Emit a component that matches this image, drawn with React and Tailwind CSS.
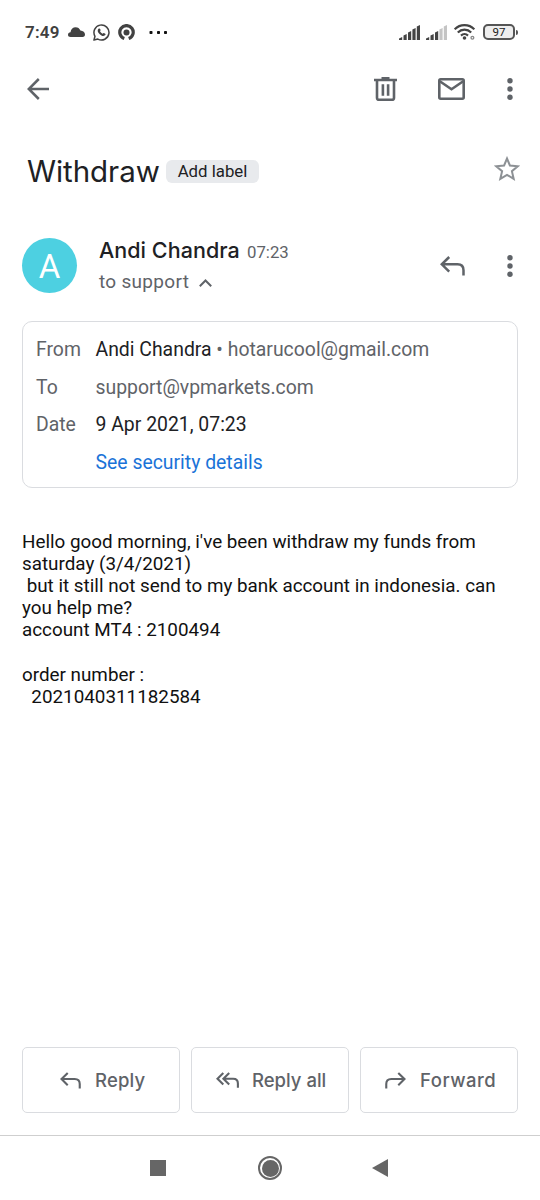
const details = [
  { label: 'From', value: 'Andi Chandra', extra: 'hotarucool@gmail.com' },
  { label: 'To', muted: 'support@vpmarkets.com' },
  { label: 'Date', value: '9 Apr 2021, 07:23' },
];

const message = `Hello good morning, i've been withdraw my funds from
saturday (3/4/2021)
 but it still not send to my bank account in indonesia. can
you help me?
account MT4 : 2100494

order number :
  2021040311182584`;

function SignalBars({ weak }) {
  return (
    <svg className="w-[21px] h-[15px]" viewBox="0 0 21 15" fill="#444">
      <path d="M0 15v-1.500L3.200 12v3Z" />
      <path d="M4.500 15v-4.500L7.700 9v6Z" />
      <path d="M9 15V7.500L12.200 6v9Z" />
      <path d="M13.400 15V4.500L16.600 3v12Z" fill={weak ? '#c4c4c4' : '#444'} />
      <path d="M17.800 15V1.500L21 0v15Z" fill={weak ? '#c4c4c4' : '#444'} />
    </svg>
  );
}

function StatusBar() {
  return (
    <div className="h-16 flex items-center justify-between pl-[25px] pr-[22px]">
      <div className="flex items-center">
        <span className="w-[43px] text-[17px] leading-none font-semibold text-[#404040] tracking-[0.2px] whitespace-nowrap">7:49</span>
        <svg className="w-[17px] h-[10px]" viewBox="0 0 17 10" fill="#424242">
          <path d="M2.600 10C.9 10 0 9 0 7.700 0 6.400 1 5.400 2.500 5.200 3 2 5 .2 7.600.2c2.300 0 4 1.200 4.800 3.300 2.800.2 4.600 1.700 4.600 4 0 1.500-.8 2.500-2.400 2.500Z" />
        </svg>
        <svg className="ml-2 w-[17px] h-[17px]" viewBox="0 0 17 17" fill="none" stroke="#424242">
          <path strokeWidth="1.500" strokeLinejoin="round" d="M.9 16.100 2 12.300A7.500 7.500 0 1 1 4.900 15.100Z" />
          <path fill="#424242" stroke="none" d="M5.900 4.600c.5-.4 1-.2 1.200.3l.5 1.200c.1.400-.5.900-.6 1.200.6 1.200 1.500 2 2.700 2.500.4-.1.800-.9 1.200-.8l1.300.7c.5.200.5.600.2 1.100-.8 1.400-2.400 1.400-4 .6C6.500 10.500 5.200 9 4.800 7.600c-.3-1.200.2-2.300 1.100-3Z" />
        </svg>
        <svg className="ml-2 w-[17px] h-[17px]" viewBox="0 0 17 17" fill="none">
          <path stroke="#424242" strokeWidth="3.200" d="M6.300 14.600A6.700 6.700 0 1 1 10.700 14.600" />
          <circle cx="8.500" cy="8.500" r="3" fill="#424242" />
        </svg>
        <svg className="ml-[14px] w-[19px] h-[3px]" viewBox="0 0 19 3" fill="#111">
          <rect x="0.500" width="3" height="3" rx="0.800" />
          <rect x="8" width="3" height="3" rx="0.800" />
          <rect x="15" width="3" height="3" rx="0.800" />
        </svg>
      </div>

      <div className="flex items-center">
        <SignalBars />
        <div className="w-1.5" />
        <SignalBars weak />
        <svg className="ml-[7px] w-[21px] h-[16px]" viewBox="0 0 21 16" fill="none" stroke="#444" strokeWidth="2.200">
          <path d="M.7 5.300C6-.2 15-.2 20.300 5.300M3.800 8.500c3.800-3.800 9.600-3.800 13.400 0M7 11.600c2-1.900 5-1.900 7 0" />
          <circle cx="10.500" cy="14" r="1.800" fill="#444" stroke="none" />
          <circle cx="18.400" cy="13.700" r="1.400" stroke="#888" strokeWidth="1.300" />
        </svg>
        <div className="ml-2 w-8 h-4 rounded-[5px] border-2 border-[#555] bg-[#eee] flex items-center justify-center pt-px text-[11.500px] leading-none text-[#222]">
          97
        </div>
        <div className="ml-px w-[2px] h-[5px] rounded-r bg-[#555]" />
      </div>
    </div>
  );
}

function MoreDots() {
  return (
    <svg className="w-[6px] h-[22px]" viewBox="0 0 6 22" fill="#5f6368">
      <circle cx="3" cy="2.800" r="2.700" />
      <circle cx="3" cy="11" r="2.700" />
      <circle cx="3" cy="19.200" r="2.700" />
    </svg>
  );
}

function Toolbar() {
  return (
    <div className="h-[50px] flex items-center pl-[26.500px] pr-[27.500px]">
      <svg className="w-[22px] h-[22px]" viewBox="0 0 22 22" fill="none" stroke="#5f6368" strokeWidth="2.500">
        <path d="M22 11H2M11.800 1 1.800 11l10 10" />
      </svg>
      <svg className="ml-auto mt-px w-[23px] h-[25px]" viewBox="0 0 23 26" preserveAspectRatio="none" fill="none" stroke="#5f6368">
        <path strokeWidth="2.600" d="M0 3h23M3 3v18.500q0 2.200 2.200 2.200h12.600q2.200 0 2.200-2.200V3" />
        <path strokeWidth="2.600" d="M8.900 7.500v12M14.100 7.500v12" />
        <path fill="#5f6368" stroke="none" d="M7.500 0h8v3h-8z" />
      </svg>
      <svg className="ml-[41px] w-[27px] h-[22px]" viewBox="0 0 27 22" fill="none" stroke="#5f6368" strokeWidth="2.600">
        <rect x="1.300" y="1.300" width="24.400" height="19.400" rx="1.400" />
        <path d="m1.800 3.200 11.700 8 11.700-8" />
      </svg>
      <div className="ml-[41.500px] flex"><MoreDots /></div>
    </div>
  );
}

function ReplyIcon({ className }) {
  return (
    <svg className={className} viewBox="0 0 25 20" fill="none" stroke="#5f6368" strokeWidth="2.500">
      <path d="M9.200 1 1.800 8.300l7.400 7.300M2 8.300h15.500q6 0 6 6V19.500" />
    </svg>
  );
}

function ReplyAllIcon() {
  return (
    <svg className="w-[23px] h-[16px]" viewBox="0 0 23 16" fill="none" stroke="#5f6368" strokeWidth="2.100">
      <path d="M7.300.9 1.500 6.700l5.800 5.900M13.200.9 7.400 6.700l5.800 5.900M7.600 6.700h9.600q4.700 0 4.700 4.700V15.800" />
    </svg>
  );
}

function ActionButton({ icon, label, className }) {
  return (
    <button className={`w-[158px] h-[66px] flex items-center rounded-[5px] border-[1.500px] border-[#dadce0] text-[18.500px] font-medium text-[#5f6368] whitespace-nowrap font-[Inter,sans-serif] ${className}`}>
      {icon}
      <span className="pt-0.5">{label}</span>
    </button>
  );
}

export default function App() {
  return (
    <div className="w-[540px] h-[1200px] flex flex-col overflow-hidden bg-white font-[Roboto,sans-serif] text-[#202124]">
      <StatusBar />
      <Toolbar />

      <div className="mt-[26px] h-[62px] flex items-center pl-[27px] pr-5">
        <h1 className="w-[139px] pt-px text-[29.500px] leading-none font-[Inter,sans-serif] tracking-[-0.050px] whitespace-nowrap">Withdraw</h1>
        <span className="w-[93px] h-[23px] rounded-md bg-[#e8eaed] flex items-center justify-center pt-px text-[16.800px] whitespace-nowrap">
          Add label
        </span>
        <svg className="ml-auto w-[26px] h-[25px] mb-[5px]" viewBox="0 0 26 25" fill="none" stroke="#8d9195" strokeWidth="2">
          <path d="m13 2.500 2.900 7 7.900.7-5.900 5 1.800 7.700-6.700-4.100-6.700 4.100 1.800-7.700-5.900-5 7.900-.7Z" />
        </svg>
      </div>

      <div className="mt-8 h-16 flex items-center pl-[22px] pr-[27px]">
        <div className="-mt-px w-[55px] h-[55px] rounded-full bg-[#4dd0e1] flex items-center justify-center pt-px text-[33px] leading-none text-white">
          A
        </div>
        <div className="ml-[22px]">
          <div className="h-8 flex items-baseline whitespace-nowrap">
            <span className="w-[148px] text-[21.500px] leading-8 font-medium tracking-[0.050px] font-[Inter,sans-serif]">Andi Chandra</span>
            <span className="text-[16.800px] text-[#5f6368]">07:23</span>
          </div>
          <div className="h-8 flex items-center pt-px text-[19px] text-[#5f6368]">
            <span className="w-[100px] tracking-[0.300px] whitespace-nowrap">to support</span>
            <svg className="w-[13px] h-[8px]" viewBox="0 0 13 8" fill="none" stroke="#5f6368" strokeWidth="2">
              <path d="m.8 7.200 5.700-5.700 5.700 5.700" />
            </svg>
          </div>
        </div>
        <ReplyIcon className="ml-auto w-[25px] h-[20px]" />
        <div className="ml-[42px] flex"><MoreDots /></div>
      </div>

      <div className="mt-[23px] mx-[22px] h-[167px] rounded-[10px] border-[1.500px] border-[#dadce0] pl-[13px] pt-[9px] text-[19.400px]">
        {details.map((row) => (
          <div key={row.label} className="h-[37.500px] flex items-center whitespace-nowrap">
            <span className="w-[59.500px] text-[#5f6368]">{row.label}</span>
            {row.value && <span>{row.value}</span>}
            {row.extra && <span className="text-[#5f6368] whitespace-pre"> • {row.extra}</span>}
            {row.muted && <span className="text-[#5f6368]">{row.muted}</span>}
          </div>
        ))}
        <div className="h-[37.500px] flex items-center pl-[59.500px] text-[#1a73d8]">See security details</div>
      </div>

      <p className="mt-[43px] mx-[22px] text-[18.830px] leading-[22.100px] text-[#111] whitespace-pre">{message}</p>

      <div className="mt-auto mb-[22px] mx-[22px] flex gap-[11px]">
        <ActionButton className="gap-[14px] pl-[37px] tracking-[0.150px]" icon={<ReplyIcon className="w-[21px] h-[17px]" />} label="Reply" />
        <ActionButton className="gap-[13px] pl-[24px]" icon={<ReplyAllIcon />} label="Reply all" />
        <ActionButton className="gap-[14px] pl-[24px] tracking-[0.500px]" icon={<ReplyIcon className="w-[21px] h-[17px] -scale-x-100" />} label="Forward" />
      </div>

      <div className="h-[65px] border-t border-[#cfcfcf] flex items-center pl-[150px]">
        <div className="w-4 h-4 bg-[#666]" />
        <div className="ml-[92px] w-6 h-6 rounded-full border-2 border-[#666] flex items-center justify-center">
          <div className="w-[17px] h-[17px] rounded-full bg-[#666]" />
        </div>
        <svg className="ml-[90px] w-[16px] h-[18px]" viewBox="0 0 16 18" fill="#666">
          <path d="M16 0v18L0 9Z" />
        </svg>
      </div>
    </div>
  );
}
